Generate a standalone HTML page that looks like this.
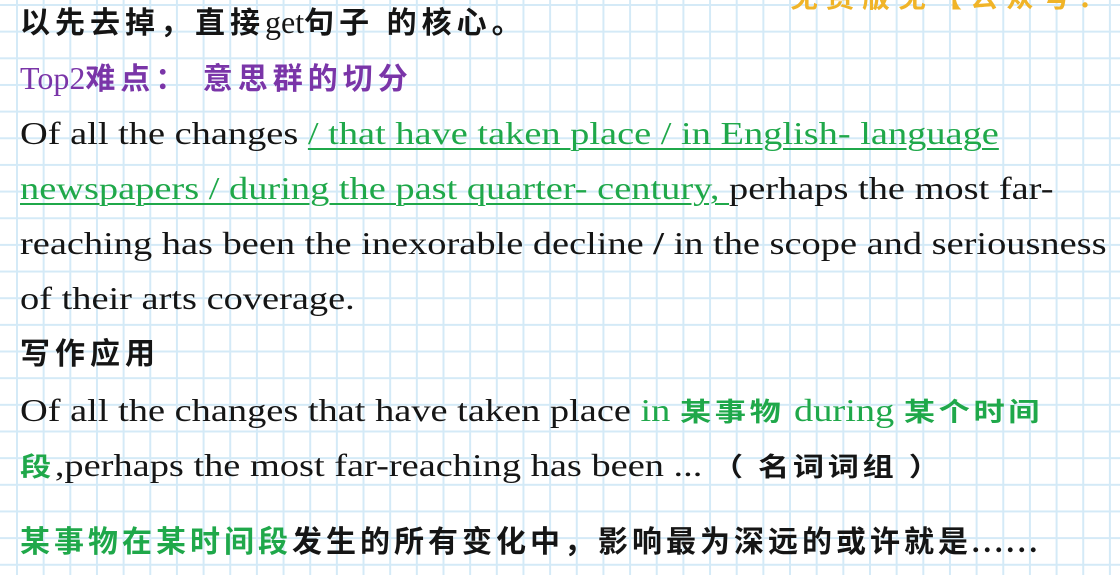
<!DOCTYPE html>
<html><head><meta charset="utf-8"><style>
html,body{margin:0;padding:0}
body{width:1120px;height:575px;overflow:hidden;position:relative;background-color:#fff;
background-image:linear-gradient(to right,#d4eaf7 2px,transparent 2px),linear-gradient(to bottom,#d4eaf7 2px,transparent 2px);
background-size:26.67px 26.67px;background-position:16px 4px;
font-family:"Liberation Serif","Noto Serif CJK SC",serif;color:#151515}
.l{position:absolute;left:20px;white-space:nowrap;font-size:30px;line-height:40px}
.e{font-size:32px;transform:scaleX(1.2);transform-origin:0 50%}
.e .c{font-size:26px;letter-spacing:3px}
.c{font-family:"Liberation Serif","Noto Sans CJK SC",sans-serif;letter-spacing:5px;font-weight:bold}
.g{color:#1fa84a}.p{color:#7a35a8}
.u{text-decoration:underline;text-decoration-thickness:2px;text-underline-offset:4px}
.yw{position:absolute;left:790px;top:0;width:330px;height:20px;overflow:hidden}
.y{position:absolute;left:0;top:-24px;font-size:28px;color:#f0b428;font-family:"Noto Sans CJK SC",sans-serif;letter-spacing:8px;font-weight:bold;white-space:nowrap}
</style></head><body>
<div class="yw"><div class="y">免费版免【公众号： 更】</div></div>
<div class="l c" style="top:2px">以先去掉，直接<span style="font-weight:normal;letter-spacing:0;font-size:32px">get</span>句子 的核心。</div>
<div class="l c p" style="top:58px"><span style="font-weight:normal;letter-spacing:0;font-size:32px;font-family:'Liberation Serif',serif">Top2</span>难点： 意思群的切分</div>
<div class="l e" style="top:113px">Of all the changes <span class="g u">/ that have taken place / in English- language</span></div>
<div class="l e" style="top:168px"><span class="g u">newspapers / during the past quarter- century, </span>perhaps the most far-</div>
<div class="l e" style="top:223px">reaching has been the inexorable decline <b>/</b> in the scope and seriousness</div>
<div class="l e" style="top:278px">of their arts coverage.</div>
<div class="l c" style="top:335px">写作应用</div>
<div class="l e" style="top:390px">Of all the changes that have taken place <span class="g">in <span class="c">某事物</span> during <span class="c">某个时间</span></span></div>
<div class="l e" style="top:445px"><span class="g c">段</span>,perhaps the most far-reaching has been ... <span class="c">（ 名词词组 ）</span></div>
<div class="l c" style="top:523px;letter-spacing:4px"><span class="g">某事物在某时间段</span>发生的所有变化中，影响最为深远的或许就是......</div>
</body></html>
